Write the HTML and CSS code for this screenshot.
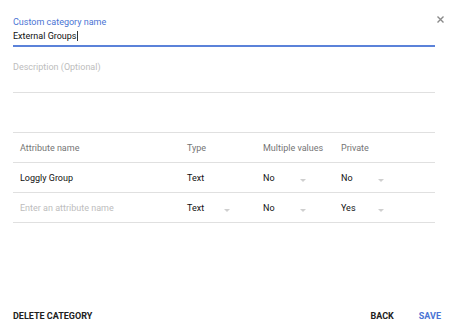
FILE: index.html
```html
<!DOCTYPE html>
<html>
<head lang="en">
    <meta charset="UTF-8">
    <title>Custom category</title>
    <link rel="stylesheet" href="styles.css">
</head>
<body>
<div class="dialog">
    <a class="close" title="Close">
        <svg width="7" height="7" viewBox="0 0 7 7"><path d="M0.5 0.5L6.5 6.5M6.5 0.5L0.5 6.5" stroke="#8a8a8a" stroke-width="1.4"/></svg>
    </a>
    <div class="field active">
        <div class="label">Custom category name</div>
        <div class="value">External Groups<span class="caret"></span></div>
    </div>
    <div class="field desc">
        <div class="placeholder">Description (Optional)</div>
    </div>

    <div class="table">
        <div class="row head">
            <div class="cell">Attribute name</div>
            <div class="cell">Type</div>
            <div class="cell">Multiple values</div>
            <div class="cell">Private</div>
        </div>
        <div class="row">
            <div class="cell">Loggly Group</div>
            <div class="cell">Text</div>
            <div class="cell select">No<i class="arrow"></i></div>
            <div class="cell select">No<i class="arrow"></i></div>
        </div>
        <div class="row">
            <div class="cell hint">Enter an attribute name</div>
            <div class="cell select">Text<i class="arrow"></i></div>
            <div class="cell select">No<i class="arrow"></i></div>
            <div class="cell select">Yes<i class="arrow"></i></div>
        </div>
    </div>

    <div class="footer">
        <a class="btn">DELETE CATEGORY</a>
        <div class="right">
            <a class="btn">BACK</a>
            <a class="btn primary">SAVE</a>
        </div>
    </div>
</div>
</body>
</html>
```

FILE: styles.css
```css
* {
    margin: 0;
    padding: 0;
    box-sizing: border-box;
}

body {
    font-family: Roboto, "Liberation Sans", sans-serif;
    color: #111;
    background: #fff;
}

.dialog {
    position: relative;
    height: 336px;
    padding: 0 25px 0 13px;
    display: flex;
    flex-direction: column;
}

.close {
    position: absolute;
    top: 16px;
    right: 16px;
    width: 7px;
    height: 7px;
    line-height: 0;
}

.field {
    border-bottom: 1px solid #e0e0e0;
}

.field.active {
    padding-top: 17px;
    height: 47px;
    border-bottom: 2px solid #5b82d9;
}

.label {
    font-size: 9px;
    line-height: 11px;
    color: #4a74d4;
}

.value {
    margin-top: 2px;
    font-size: 9px;
    line-height: 13px;
}

.caret {
    display: inline-block;
    width: 1px;
    height: 10px;
    background: #333;
    vertical-align: -2px;
}

.field.desc {
    height: 46px;
    padding-top: 15px;
}

.placeholder {
    font-size: 9px;
    line-height: 11px;
    color: #bdbdbd;
}

.table {
    margin-top: 39px;
    border-top: 1px solid #e0e0e0;
}

.row {
    display: grid;
    grid-template-columns: 174px 76px 78px 1fr;
    height: 30px;
    border-bottom: 1px solid #e0e0e0;
    align-items: center;
    font-size: 9px;
}

.row .cell:first-child {
    padding-left: 7px;
}

.head .cell {
    color: #757575;
}

.hint {
    color: #bdbdbd;
}

.select {
    position: relative;
}

.arrow {
    position: absolute;
    left: 37px;
    top: 50%;
    margin-top: 1px;
    width: 0;
    height: 0;
    border-left: 3px solid transparent;
    border-right: 3px solid transparent;
    border-top: 3px solid #cfcfcf;
}

.footer {
    margin-top: auto;
    padding-bottom: 13px;
    display: flex;
    justify-content: space-between;
    align-items: center;
    font-size: 9px;
    line-height: 14px;
    font-weight: 700;
}

.footer .right {
    display: flex;
    gap: 25px;
    margin-right: -6px;
}

.btn {
    color: #212121;
}

.btn.primary {
    color: #4a74d4;
}
```
